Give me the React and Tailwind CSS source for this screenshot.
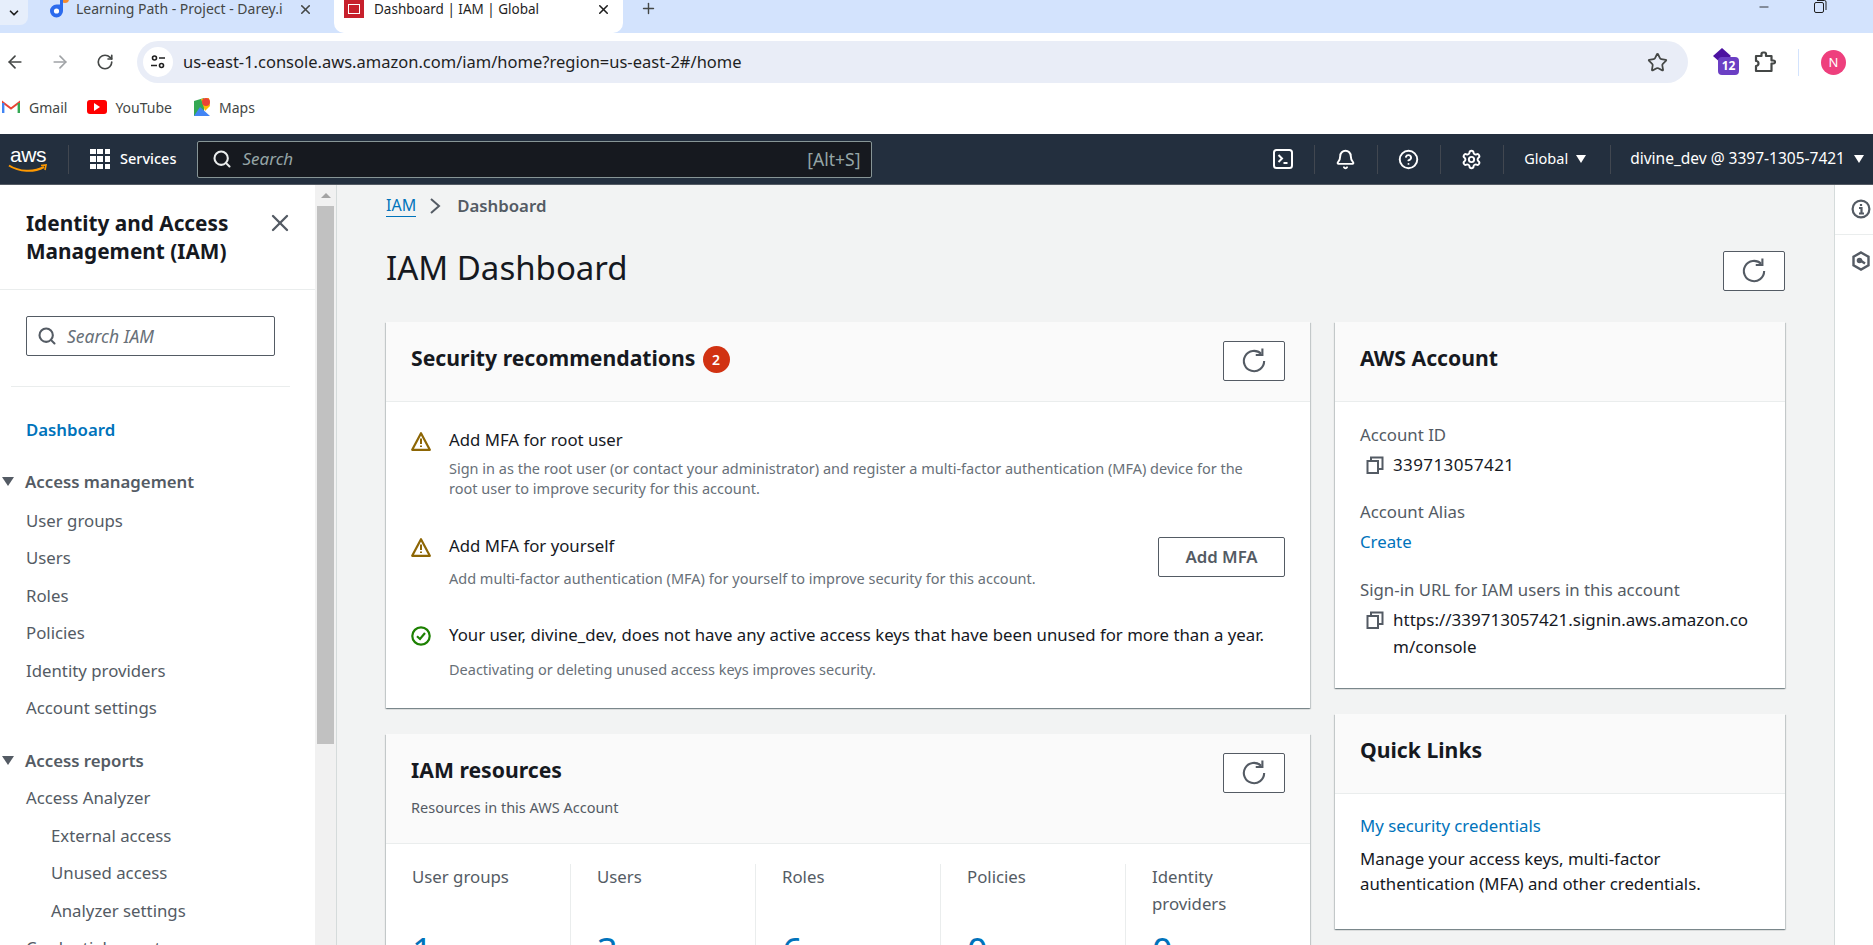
import { X, Search, Star, ArrowLeft, ArrowRight, RotateCw, Plus, ChevronDown, Minus, Settings, CircleHelp, Bell } from "lucide-react";

const nf = "font-['Noto_Sans','Open_Sans',sans-serif]";

function Refresh({ size = 28 }) {
  return (
    <svg width={size} height={size} viewBox="0 0 16 16" fill="none" stroke="#545b64" strokeWidth="1.2">
      <path d="M13.8 8A5.8 5.8 0 1 1 12.1 3.9" />
      <path d="M12.8 0.8V4.6H9" />
    </svg>
  );
}

function RefreshButton({ className }) {
  return (
    <button className={`w-[62px] h-10 border border-[#545b64] rounded-[2px] bg-white flex items-center justify-center shrink-0 ${className || ""}`}>
      <Refresh />
    </button>
  );
}

function Warn() {
  return (
    <svg width="20" height="20" viewBox="0 0 20 20" fill="none" className="shrink-0">
      <path d="M10 2.2 18.8 18.8H1.2Z" stroke="#8d6605" strokeWidth="2.2" strokeLinejoin="round" />
      <path d="M10 7.5V13M10 14.4V16" stroke="#8d6605" strokeWidth="2" />
    </svg>
  );
}

function Ok() {
  return (
    <svg width="20" height="20" viewBox="0 0 20 20" fill="none" className="shrink-0">
      <circle cx="10" cy="10" r="8.7" stroke="#1d8102" strokeWidth="2.2" />
      <path d="M6 10.3 9 13 14 7" stroke="#1d8102" strokeWidth="2.2" />
    </svg>
  );
}

function Copy() {
  return (
    <svg width="18" height="18" viewBox="0 0 18 18" fill="none" stroke="#545b64" strokeWidth="2" className="shrink-0">
      <rect x="1.5" y="5" width="10.5" height="12" />
      <path d="M5 5V1.5H16.5V13H12" />
    </svg>
  );
}

function AwsLogo() {
  return (
    <div className="relative w-[40px] h-[30px] shrink-0">
      <span className="block text-white text-[21px] leading-[22px] font-['Liberation_Sans',sans-serif] tracking-[-0.5px] text-center">aws</span>
      <svg width="40" height="10" viewBox="0 0 40 10" className="absolute left-0 bottom-0" fill="none">
        <path d="M1 1.5C11 8 26 8.5 36 3" stroke="#f90" strokeWidth="2" />
        <path d="M33 1.5 38 1 37 6" stroke="#f90" strokeWidth="1.6" />
      </svg>
    </div>
  );
}

function NavDivider() {
  return <div className="w-px h-[29px] bg-[#414750]" />;
}

function Browser() {
  return (
    <div className={`${nf} bg-white`}>
      {/* tab strip, the top of it is cut off */}
      <div className="h-[33px] bg-[#d3e3fd] flex items-start relative overflow-hidden">
        <div className="w-[28px] h-[25px] bg-[#e6eefb] rounded-br-lg flex items-center justify-center shrink-0">
          <ChevronDown size={14} strokeWidth={3} className="text-[#1f1f1f]" />
        </div>
        <div className="w-[306px] h-full flex items-start pl-[17px] shrink-0">
          <svg width="26" height="24" viewBox="0 0 26 24" className="shrink-0 -mt-1">
            <circle cx="20" cy="3" r="4" fill="#f58a2e" />
            <path d="M15 4h3v11a6.5 6.5 0 1 1-6.5-6.5H15Z" fill="#2c6bed" />
            <circle cx="11.5" cy="15" r="2.6" fill="#fff" />
          </svg>
          <span className="ml-[5px] text-[14px] leading-[18px] text-[#444746] w-[207px] whitespace-nowrap overflow-hidden">Learning Path - Project - Darey.io</span>
          <X size={15} strokeWidth={2.5} className="text-[#444746] ml-[15px] mt-[2px]" />
        </div>
        <div className="w-[289px] h-full bg-white rounded-b-[10px] flex items-start pl-[10px] shrink-0">
          <div className="w-5 h-[18px] bg-[#c7202c] flex items-center justify-center shrink-0">
            <div className="w-3 h-[10px] border border-white" />
          </div>
          <span className="ml-[10px] text-[13.5px] leading-[18px] text-[#1f1f1f] w-[222px] whitespace-nowrap">Dashboard | IAM | Global</span>
          <X size={15} strokeWidth={2.5} className="text-[#1f1f1f] mt-[2px]" />
        </div>
        <Plus size={17} strokeWidth={2} className="text-[#444746] ml-[17px]" />
        <div className="ml-auto flex items-start">
          <Minus size={14} className="text-[#1f1f1f] mr-[42px]" strokeWidth={1.5} />
          <svg width="14" height="14" viewBox="0 0 14 14" fill="none" stroke="#1f1f1f" className="-mt-px">
            <rect x="1.5" y="3.5" width="9" height="10" rx="1.5" />
            <path d="M4 1.5H11.5A1.5 1.5 0 0 1 13 3V11" />
          </svg>
          <X size={14} className="text-[#1f1f1f] ml-[46px] -mr-[14px] -mt-1" strokeWidth={1.5} />
        </div>
      </div>

      {/* toolbar */}
      <div className="h-[57px] flex items-start pt-2">
        <div className="flex items-center h-[42px] w-[137px] shrink-0 pl-[5px]">
          <ArrowLeft size={20} strokeWidth={2} className="text-[#444746]" />
          <ArrowRight size={20} strokeWidth={2} className="text-[#a0a3a6] ml-[25px]" />
          <RotateCw size={18} strokeWidth={2.2} className="text-[#444746] ml-[26px]" />
        </div>
        <div className="w-[1551px] h-[42px] rounded-full bg-[#e9edf7] flex items-center pl-[6px] pr-[20px] shrink-0">
          <div className="w-[30px] h-[30px] rounded-full bg-white flex items-center justify-center shrink-0">
            <svg width="16" height="16" viewBox="0 0 16 16" fill="none" stroke="#1f1f1f" strokeWidth="1.6">
              <circle cx="4.5" cy="4" r="2" />
              <path d="M9 4H15M1 11.5H7" />
              <circle cx="11.5" cy="11.5" r="2" />
            </svg>
          </div>
          <span className="ml-[10px] text-[16.5px] text-[#1f1f1f] leading-none">us-east-1.console.aws.amazon.com/iam/home?region=us-east-2#/home</span>
          <Star size={21} strokeWidth={2} className="ml-auto text-[#444746]" />
        </div>
        <div className="flex items-center h-[42px] flex-1 pl-[23px]">
          <div className="relative w-[28px] h-[30px]">
            <svg width="22" height="22" viewBox="0 0 22 22" className="absolute left-0 top-0">
              <path d="M11 1 20 9 11 17 2 9Z" fill="#4c12a1" />
            </svg>
            <div className="absolute left-[7px] top-[10px] w-[21px] h-[18px] rounded-[4px] bg-[#6b3fc4] text-white text-[12px] leading-[18px] font-bold text-center">12</div>
          </div>
          <svg width="22" height="22" viewBox="0 0 22 22" fill="none" stroke="#444746" strokeWidth="2.2" strokeLinejoin="round" className="ml-[15px] shrink-0">
            <path d="M2 5H7.5V3A1.5 1.5 0 0 1 9 1.5H10.5A1.5 1.5 0 0 1 12 3V5H17.5V9.5H19.5A1.2 1.2 0 0 1 19.5 12.5H17.5V20H2V15A2.5 2.5 0 0 0 4.5 12.5 2.5 2.5 0 0 0 2 10Z" />
          </svg>
          <div className="w-px h-[27px] bg-[#d3e3fd] ml-[22px]" />
          <div className="w-[25px] h-[25px] rounded-full bg-[#ee3f7d] text-white text-[13px] leading-[25px] text-center ml-[22px]">N</div>
        </div>
      </div>

      {/* bookmarks */}
      <div className="h-[44px] flex items-center pl-[2px] pb-[10px] text-[14px] text-[#444746]">
        <svg width="18" height="14" viewBox="0 0 18 14" fill="none" className="shrink-0">
          <path d="M1 13V2.5L9 8.5 17 2.5V13" stroke="#ea4335" strokeWidth="2" />
          <path d="M1.2 13V3" stroke="#4285f4" strokeWidth="2.4" />
          <path d="M16.8 13V3" stroke="#34a853" strokeWidth="2.4" />
        </svg>
        <span className="ml-[9px]">Gmail</span>
        <div className="ml-[20px] w-5 h-[14px] rounded-[3px] bg-[#f00] flex items-center justify-center">
          <div className="w-0 h-0 border-y-[4px] border-y-transparent border-l-[6px] border-l-white" />
        </div>
        <span className="ml-[8px]">YouTube</span>
        <svg width="18" height="20" viewBox="0 0 18 20" className="ml-[21px] shrink-0">
          <path d="M1 4 11 1V19L1 19Z" fill="#34a853" />
          <path d="M1 19 7 10 17 19Z" fill="#4285f4" />
          <path d="M8 2 16 1 17 9 12 14Z" fill="#fbbc04" />
          <circle cx="13" cy="5" r="4" fill="#ea4335" />
        </svg>
        <span className="ml-[8px]">Maps</span>
      </div>
    </div>
  );
}

function AwsNav() {
  return (
    <div className={`${nf} h-[51px] bg-[#232f3e] border-b border-[#545b64] flex items-center text-white shrink-0`}>
      <div className="pl-[8px] w-[68px] shrink-0 flex items-center"><AwsLogo /></div>
      <NavDivider />
      <div className="ml-[21px] grid grid-cols-3 gap-[2px] w-[20px] shrink-0">
        {Array.from({ length: 9 }).map((_, i) => <div key={i} className="w-[5.5px] h-[5.5px] bg-white" />)}
      </div>
      <span className="ml-[10px] text-[14.5px] font-medium">Services</span>
      <div className="ml-[21px] w-[675px] h-[37px] bg-[#16191f] border border-[#879596] rounded-[2px] flex items-center pl-[14px] pr-[11px] shrink-0">
        <Search size={20} strokeWidth={2.5} className="text-[#eaeded]" />
        <span className="ml-[10px] text-[17px] italic text-[#95a5a6]">Search</span>
        <span className="ml-auto text-[17.5px] text-[#95a5a6]">[Alt+S]</span>
      </div>
      <div className="flex items-center ml-auto">
        <svg width="20" height="20" viewBox="0 0 20 20" fill="none" stroke="#fff" strokeWidth="2">
          <rect x="1" y="1" width="18" height="18" rx="2.5" />
          <path d="M5.5 6 9 9.5 5.5 13M10.5 14H14.5" />
        </svg>
        <div className="ml-[21px]"><NavDivider /></div>
        <Bell size={21} strokeWidth={2.2} className="ml-[20px]" />
        <div className="ml-[21px]"><NavDivider /></div>
        <CircleHelp size={21} strokeWidth={2.2} className="ml-[20px]" />
        <div className="ml-[21px]"><NavDivider /></div>
        <Settings size={21} strokeWidth={2.2} className="ml-[20px]" />
        <div className="ml-[21px]"><NavDivider /></div>
        <span className="ml-[20px] text-[14.5px]">Global</span>
        <div className="ml-[8px] w-0 h-0 border-x-[5px] border-x-transparent border-t-[8px] border-t-white" />
        <div className="ml-[24px]"><NavDivider /></div>
        <span className="ml-[19px] text-[15.5px]">divine_dev @ 3397-1305-7421</span>
        <div className="ml-[9px] mr-[9px] w-0 h-0 border-x-[5px] border-x-transparent border-t-[8px] border-t-white" />
      </div>
    </div>
  );
}

function Tri() {
  return <div className="w-0 h-0 border-x-[6px] border-x-transparent border-t-[9px] border-t-[#545b64] shrink-0" />;
}

function NavLink({ children, sub }) {
  return <div className={`h-[37.5px] leading-[37.5px] text-[16.8px] text-[#545b64] whitespace-nowrap ${sub ? "pl-[51px]" : "pl-[26px]"}`}>{children}</div>;
}

function NavGroup({ children }) {
  return (
    <div className="flex items-center h-[37.5px] pl-[2px] text-[16.8px] font-semibold text-[#545b64]">
      <Tri />
      <span className="ml-[11px]">{children}</span>
    </div>
  );
}

function Sidebar() {
  return (
    <div className={`${nf} flex shrink-0`}>
      <div className="w-[315px] bg-white overflow-hidden">
        <div className="h-[105px] border-b border-[#eaeded] pl-[26px] pr-[32px] pt-[24px] flex items-start justify-between">
          <div className="text-[20.8px] leading-[28px] font-bold text-[#16191f]">Identity and Access Management (IAM)</div>
          <X size={28} strokeWidth={2} className="text-[#545b64] shrink-0 -mr-[11px]" />
        </div>
        <div className="px-[26px] pt-[26px] pb-[30px]">
          <div className="w-[249px] h-10 border border-[#545b64] rounded-[2px] flex items-center pl-[10px]">
            <Search size={20} strokeWidth={2.5} className="text-[#545b64]" />
            <span className="ml-[10px] text-[17.5px] italic text-[#687078]">Search IAM</span>
          </div>
        </div>
        <div className="mx-[11px] border-t border-[#eaeded] w-[279px]" />
        <div className="pl-[26px] mt-[29px] h-[28px] leading-[28px] text-[16.8px] font-semibold text-[#0073bb]">Dashboard</div>
        <div className="mt-[19px] mb-[1px]"><NavGroup>Access management</NavGroup></div>
        <NavLink>User groups</NavLink>
        <NavLink>Users</NavLink>
        <NavLink>Roles</NavLink>
        <NavLink>Policies</NavLink>
        <NavLink>Identity providers</NavLink>
        <NavLink>Account settings</NavLink>
        <div className="mt-[15px]"><NavGroup>Access reports</NavGroup></div>
        <NavLink>Access Analyzer</NavLink>
        <NavLink sub>External access</NavLink>
        <NavLink sub>Unused access</NavLink>
        <NavLink sub>Analyzer settings</NavLink>
        <NavLink>Credential report</NavLink>
      </div>
      <div className="w-[22px] bg-[#f1f1f1] border-r border-[#d5dbdb] px-[2px] shrink-0">
        <div className="h-[21px] flex items-center justify-center">
          <div className="w-0 h-0 border-x-[5px] border-x-transparent border-b-[5px] border-b-[#a3a3a3]" />
        </div>
        <div className="w-[17px] h-[538px] bg-[#c1c1c1]" />
      </div>
    </div>
  );
}

function Card({ title, badge, sub, action, children, className }) {
  return (
    <div className={`bg-white shadow-[0_1px_1px_0_rgba(0,28,36,0.3),1px_1px_1px_0_rgba(0,28,36,0.15),-1px_1px_1px_0_rgba(0,28,36,0.15)] ${className || ""}`}>
      <div className={`bg-[#fafafa] border-b border-[#eaeded] px-[25px] flex justify-between ${sub ? "h-[110px] pt-[19px]" : "h-[80px] pt-[19px]"}`}>
        <div>
          <div className="flex items-center h-10 -mt-[3px]">
            <span className="text-[21.2px] font-bold text-[#16191f]">{title}</span>
            {badge && <span className="ml-[7px] mt-[3px] w-[27px] h-[27px] rounded-full bg-[#d13212] text-white text-[14px] font-semibold text-center leading-[27px]">{badge}</span>}
          </div>
          {sub && <div className="mt-[7px] text-[14.5px] leading-[20px] text-[#545b64]">{sub}</div>}
        </div>
        {action}
      </div>
      {children}
    </div>
  );
}

function Rec({ icon, title, children, right, className }) {
  return (
    <div className={`flex ${className || ""}`}>
      <div className="w-[38px] shrink-0 pt-[3px]">{icon}</div>
      <div className="flex-1 min-w-0">
        <div className="text-[16.8px] leading-[24px] text-[#16191f] whitespace-nowrap">{title}</div>
        {children}
      </div>
      {right}
    </div>
  );
}

function Stat({ label, value, last }) {
  return (
    <div className={`w-[185px] pl-[26px] shrink-0 h-[90px] ${last ? "pr-[50px]" : "pr-2 border-r border-[#eaeded]"}`}>
      <div className="h-[67px] -mt-px mb-px text-[16.8px] leading-[27px] text-[#545b64]">{label}</div>
      <div className="text-[36px] leading-[40px] text-[#0073bb]">{value}</div>
    </div>
  );
}

function Dashboard() {
  return (
    <div className={`${nf} flex-1 min-w-0 bg-[#f2f3f3] overflow-hidden px-[49px]`}>
      <div className="flex items-center h-[42px] w-[450px]">
        <span className="text-[16px] text-[#0073bb] border-b border-[#0073bb] leading-[21px]">IAM</span>
        <svg width="12" height="18" viewBox="0 0 12 18" fill="none" stroke="#545b64" strokeWidth="2" className="ml-[13px]">
          <path d="M2 2 10 9 2 16" />
        </svg>
        <span className="ml-[16px] text-[16.8px] font-semibold text-[#545b64]">Dashboard</span>
      </div>
      <div className="flex justify-between items-start mt-[24px]">
        <h1 className="text-[33px] leading-[34px] font-normal text-[#16191f]">IAM Dashboard</h1>
        <RefreshButton />
      </div>
      <div className="grid grid-cols-[924px_450px] gap-x-[25px] mt-[31px] items-start">
        <div>
          <Card title="Security recommendations" badge="2" action={<RefreshButton />}>
            <div className="px-[25px] pt-[26px] h-[306px]">
              <Rec icon={<Warn />} title="Add MFA for root user">
                <div className="mt-[6px] text-[14.5px] leading-[20px] text-[#687078] w-[820px]">Sign in as the root user (or contact your administrator) and register a multi-factor authentication (MFA) device for the root user to improve security for this account.</div>
              </Rec>
              <Rec icon={<Warn />} title="Add MFA for yourself" className="mt-[36px]" right={
                <button className="w-[127px] h-10 mt-[3px] border border-[#545b64] rounded-[2px] bg-white text-[16.8px] font-semibold text-[#545b64] shrink-0">Add MFA</button>
              }>
                <div className="mt-[10px] text-[14.5px] leading-[20px] text-[#687078]">Add multi-factor authentication (MFA) for yourself to improve security for this account.</div>
              </Rec>
              <Rec icon={<Ok />} title="Your user, divine_dev, does not have any active access keys that have been unused for more than a year." className="mt-[35px]">
                <div className="mt-[12px] text-[14.5px] leading-[20px] text-[#687078]">Deactivating or deleting unused access keys improves security.</div>
              </Rec>
            </div>
          </Card>
          <Card title="IAM resources" sub="Resources in this AWS Account" action={<RefreshButton />} className="mt-[26px]">
            <div className="flex pt-[20px]">
              <Stat label="User groups" value="1" />
              <Stat label="Users" value="3" />
              <Stat label="Roles" value="6" />
              <Stat label="Policies" value="0" />
              <Stat label="Identity providers" value="0" last />
            </div>
          </Card>
        </div>
        <div>
          <Card title="AWS Account">
            <div className="px-[25px] pt-[19px] h-[286px] text-[16.8px] leading-[27px] text-[#16191f]">
              <div className="text-[#545b64]">Account ID</div>
              <div className="flex items-center mt-[3px] pl-[6px]"><Copy /><span className="ml-[9px] text-[17px] tracking-[0.4px]">339713057421</span></div>
              <div className="text-[#545b64] mt-[20px]">Account Alias</div>
              <div className="text-[#0073bb] mt-[3px]">Create</div>
              <div className="text-[#545b64] mt-[21px]">Sign-in URL for IAM users in this account</div>
              <div className="flex items-start mt-[3px] pl-[6px]">
                <div className="mt-[5px]"><Copy /></div>
                <span className="ml-[9px] text-[17px] break-all w-[370px]">https://339713057421.signin.aws.amazon.com/console</span>
              </div>
            </div>
          </Card>
          <Card title="Quick Links" className="mt-[26px]">
            <div className="px-[25px] pt-[19px] h-[135px] text-[16.8px] leading-[25px] text-[#16191f]">
              <div className="text-[#0073bb]">My security credentials</div>
              <div className="mt-[8px]">Manage your access keys, multi-factor authentication (MFA) and other credentials.</div>
            </div>
          </Card>
        </div>
      </div>
    </div>
  );
}

function Rail() {
  return (
    <div className="w-[39px] shrink-0 bg-white border-l border-[#d5dbdb] overflow-hidden">
      <div className="h-[50px] border-b border-[#eaeded] pl-[16px] pt-[14px]">
        <svg width="20" height="20" viewBox="0 0 20 20" fill="none" stroke="#545b64" strokeWidth="2.2">
          <circle cx="10" cy="10" r="8.4" />
          <path d="M8 9H10.5V14.5M8 14.5H13M10 5V7" />
        </svg>
      </div>
      <div className="pl-[16px] pt-[16px]">
        <svg width="20" height="20" viewBox="0 0 20 20" fill="none" stroke="#545b64" strokeWidth="2.4">
          <path d="M10 1.5 17.5 5.8V14.2L10 18.5 2.5 14.2V5.8Z" />
          <path d="M8 8.5 14 12.5" />
          <circle cx="8.5" cy="9.5" r="1.6" fill="#545b64" />
        </svg>
      </div>
    </div>
  );
}

export default function App() {
  return (
    <div className="w-[1873px] h-[945px] overflow-hidden flex flex-col bg-white">
      <Browser />
      <AwsNav />
      <div className="flex flex-1 min-h-0">
        <Sidebar />
        <Dashboard />
        <Rail />
      </div>
    </div>
  );
}
